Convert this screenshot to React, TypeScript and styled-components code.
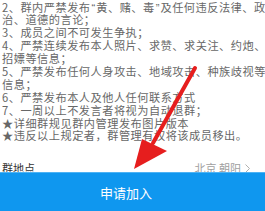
import React from 'react'
import styled, { createGlobalStyle } from 'styled-components'

const GlobalStyle = createGlobalStyle`
  html, body {
    margin: 0;
    padding: 0;
    background: #ffffff;
    overflow: hidden;
  }
  body {
    font-family: "Noto Sans CJK SC", "Noto Sans", sans-serif;
  }
`

const Page = styled.div`
  position: relative;
  width: 265px;
  height: 211px;
  overflow: hidden;
  background: #ffffff;
`

const Rules = styled.div`
  display: flex;
  flex-direction: column;
  padding: 0.5px 0 0 2px;
`

const RuleLine = styled.div`
  font-size: 11.2px;
  letter-spacing: 0.5px;
  line-height: 12.9px;
  height: 12.9px;
  color: #676767;
  white-space: nowrap;
`

const Quote = styled.span`
  font-family: "Liberation Sans", sans-serif;
  letter-spacing: 0;
  padding: 0 1px;
`

const LocationRow = styled.div`
  display: flex;
  align-items: center;
  justify-content: space-between;
  margin-top: 19px;
  padding: 0 15px 0 2px;
  height: 14px;
`

const LocationLabel = styled.span`
  font-size: 11px;
  color: #333333;
`

const LocationValue = styled.span`
  display: flex;
  align-items: center;
  gap: 4px;
  font-size: 11px;
  color: #a0a0a0;
`

const JoinButton = styled.button`
  position: absolute;
  left: 0;
  right: 0;
  bottom: 0;
  height: 39px;
  border: 0;
  border-top: 1px solid #4db3f5;
  background: #0f97ef;
  color: #ffffff;
  font-family: "Noto Sans CJK SC", "Noto Sans", sans-serif;
  font-size: 13px;
  padding: 0 13px 0 0;
  cursor: pointer;
`

const ArrowLayer = styled.svg`
  position: absolute;
  left: 0;
  top: 0;
  pointer-events: none;
`

const rules: React.ReactNode[] = [
  <>
    2、群内严禁发布<Quote>“</Quote>黄、赌、毒<Quote>”</Quote>及任何违反法律、政
  </>,
  '治、道德的言论；',
  '3、成员之间不可发生争执；',
  '4、严禁连续发布本人照片、求赞、求关注、约炮、',
  '招嫖等信息；',
  '5、严禁发布任何人身攻击、地域攻击、种族歧视等',
  '信息；',
  '6、严禁发布本人及他人任何联系方式',
  '7、一周以上不发言者将视为自动退群；',
  '★详细群规见群内管理发布图片版本',
  '★违反以上规定者，群管理有权将该成员移出。',
]

const Chevron = () => (
  <svg width="5" height="9" viewBox="0 0 5 9">
    <path d="M0.5 0.5 L4.5 4.5 L0.5 8.5" fill="none" stroke="#b0b0b0" strokeWidth="1" />
  </svg>
)

const App = () => (
  <Page>
    <GlobalStyle />
    <Rules>
      {rules.map((line, i) => (
        <RuleLine key={i}>{line}</RuleLine>
      ))}
    </Rules>
    <LocationRow>
      <LocationLabel>群地点</LocationLabel>
      <LocationValue>
        北京 朝阳
        <Chevron />
      </LocationValue>
    </LocationRow>
    <JoinButton>申请加入</JoinButton>
    <ArrowLayer width="265" height="211" viewBox="0 0 265 211">
      <line x1="195" y1="68" x2="153" y2="143" stroke="#e61e1e" strokeWidth="4" strokeLinecap="round" />
      <polygon points="134,169 142,139 167,151" fill="#e61e1e" />
    </ArrowLayer>
  </Page>
)

export default App
